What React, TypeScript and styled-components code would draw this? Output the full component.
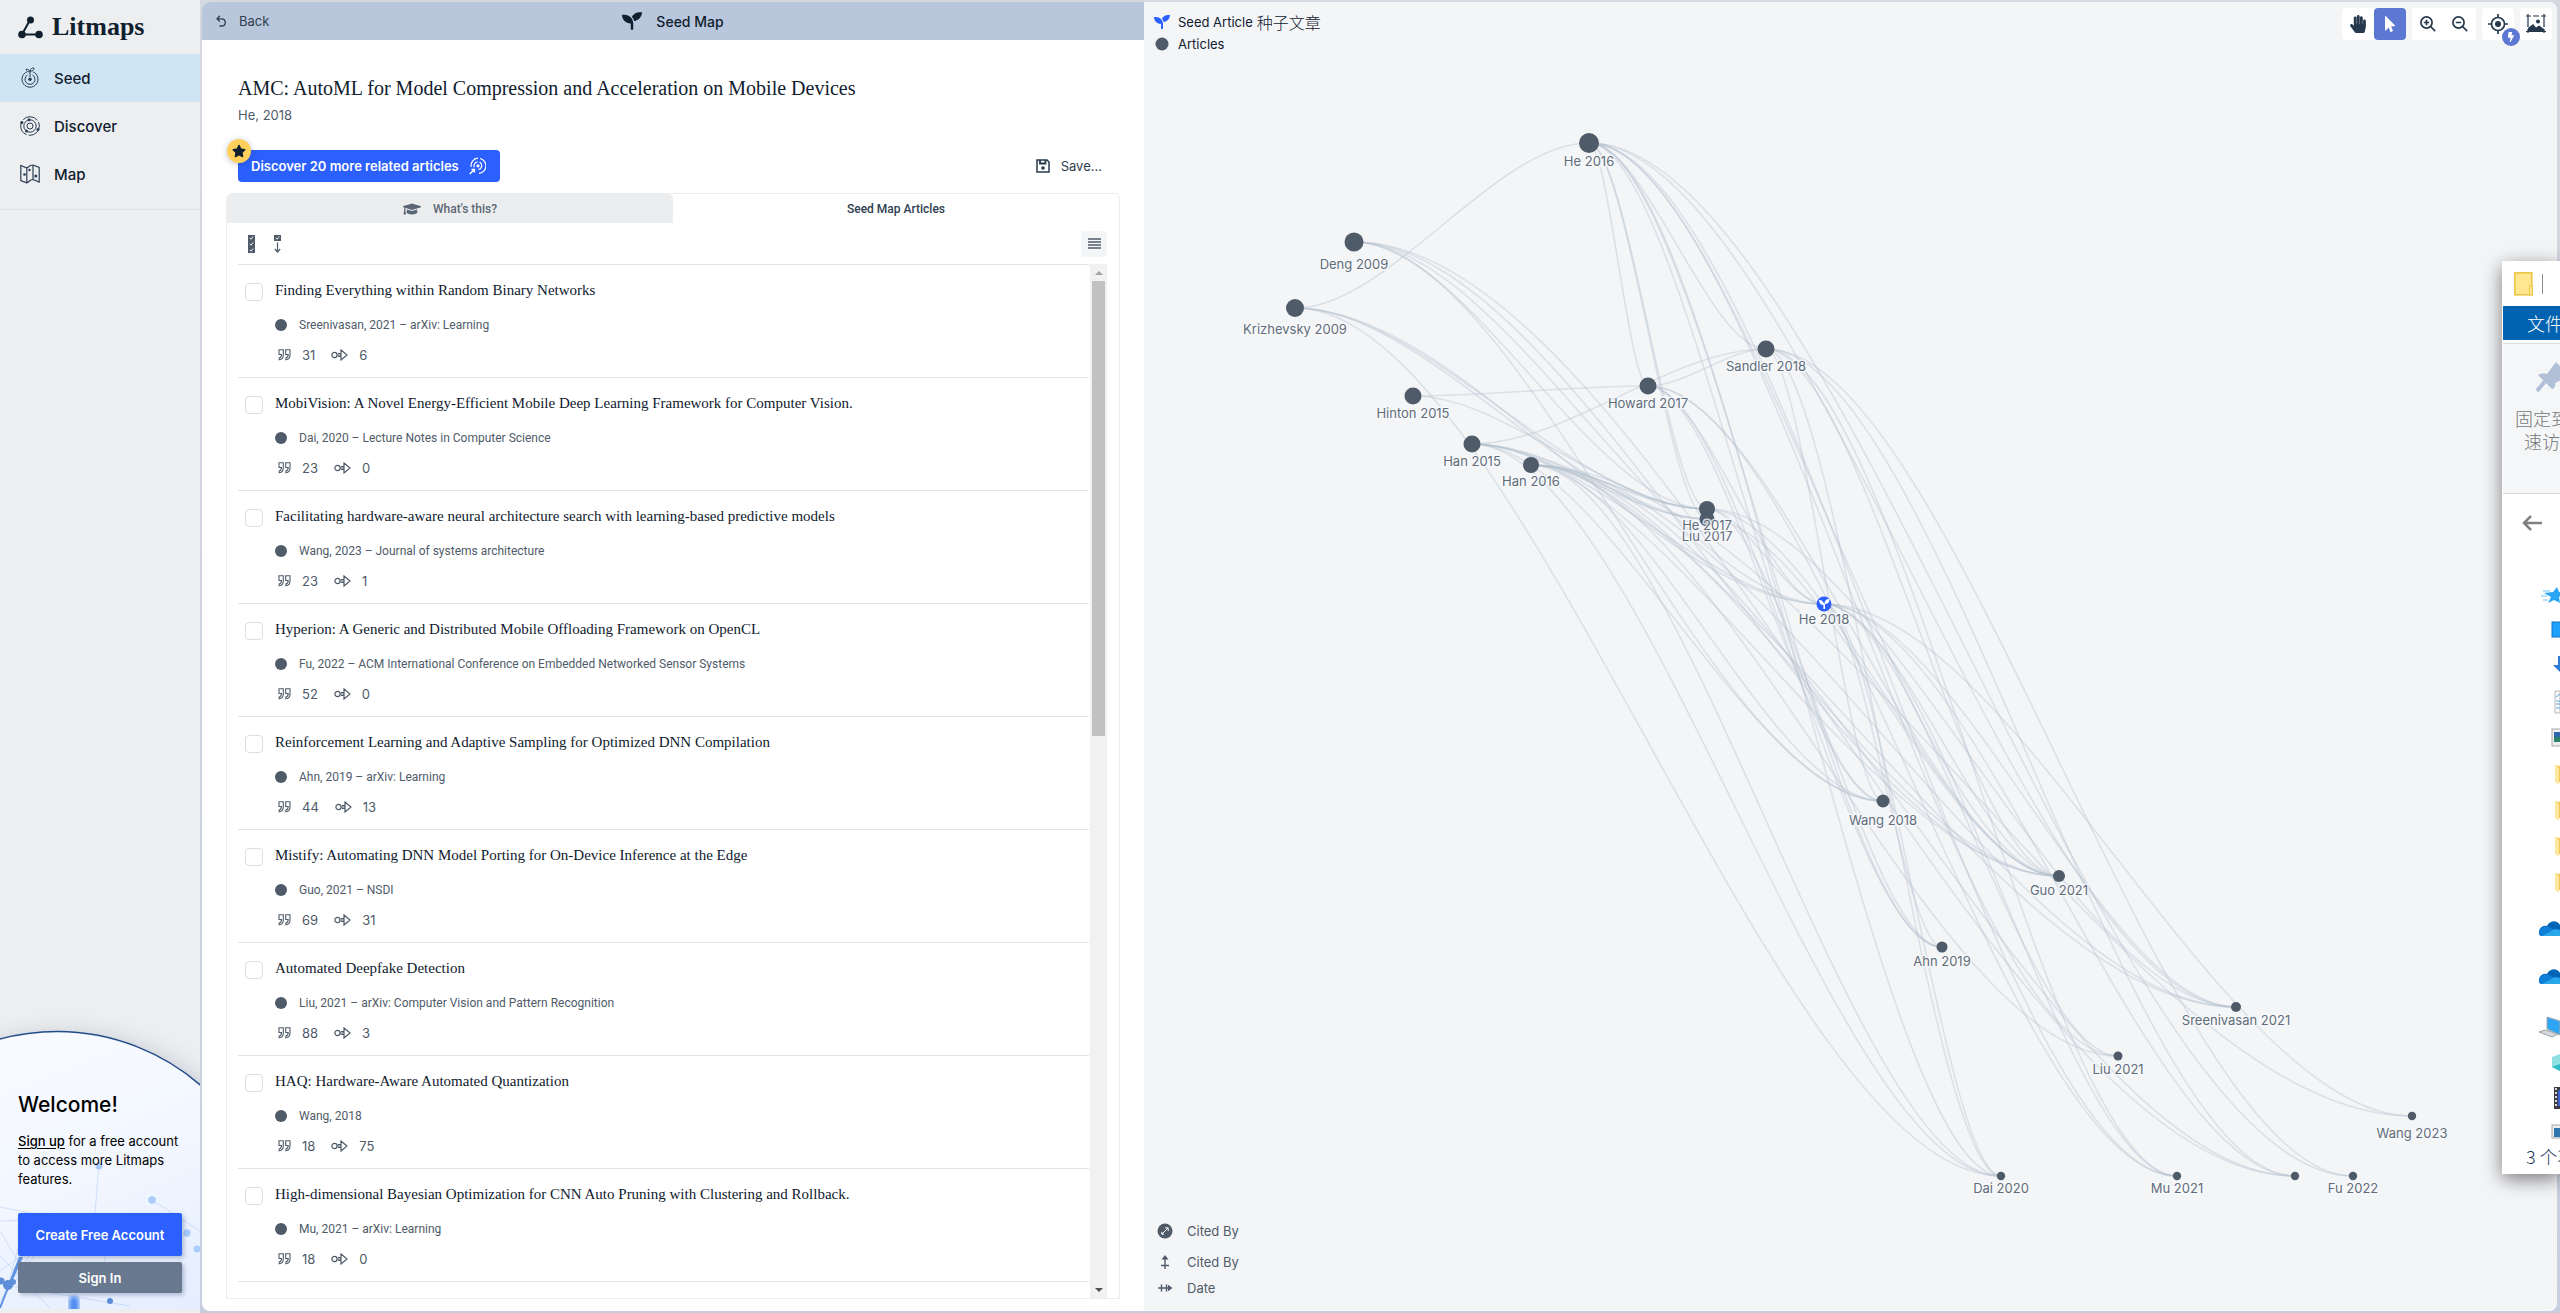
import React from "react";
import styled, { createGlobalStyle, css } from "styled-components";
import { FaSeedling, FaStar, FaGraduationCap, FaHandPaper, FaMousePointer, FaBolt } from "react-icons/fa";

const sans = `Inter, "Liberation Sans", "Noto Sans CJK SC", sans-serif`;
const narrow = `Roboto, "Liberation Sans", "Noto Sans CJK SC", sans-serif`;
const serif = `"Liberation Serif", "Noto Sans CJK SC", serif`;
const slate = "#4f5b69";
const label = "#616d7b";
const ink = "#10202e";
const line = "#e1e2e3";
const blue = "#2b60ff";

const GlobalStyle = createGlobalStyle`
  * { box-sizing: border-box; }
  body { margin: 0; background: #eceef0; font-family: ${sans}; color: ${ink}; }
  button { font: inherit; color: inherit; border: 0; padding: 0; background: none; cursor: pointer; }
  h1, h2, h3, p, ul { margin: 0; padding: 0; font-weight: 400; }
  ul { list-style: none; }
  svg { display: block; flex: none; }
`;

const Shell = styled.div`
  position: relative;
  display: flex;
  height: 100vh;
  overflow: hidden;
`;

/* ---------- sidebar ---------- */
const Sidebar = styled.aside`
  display: flex;
  flex-direction: column;
  flex: none;
  width: 200px;
  padding-bottom: 4px;
  background: #eceef0;
`;
const Brand = styled.a`
  display: flex;
  align-items: center;
  gap: 9px;
  height: 54px;
  padding-left: 18px;
  font: 700 26px/32px ${serif};
  color: ${ink};
  text-decoration: none;
`;
const Nav = styled.nav`
  padding-bottom: 11px;
  border-bottom: 1px solid #dfe1e3;
`;
const NavLink = styled.a<{ $active?: boolean }>`
  display: flex;
  align-items: center;
  gap: 14px;
  height: 48px;
  padding-left: 20px;
  font-size: 15px;
  font-weight: 500;
  color: ${ink};
  text-decoration: none;
  background: ${(p) => (p.$active ? "#d0e5f3" : "transparent")};
`;
const Welcome = styled.section`
  position: relative;
  margin-top: auto;
  height: 278px;
  padding: 59px 18px 0;
  color: #000;
`;
const WelcomeArt = styled.svg`
  position: absolute;
  inset: 0;
  width: 100%;
  height: 100%;
`;
const WelcomeBody = styled.div`
  position: relative;
  display: flex;
  flex-direction: column;
`;
const WelcomeTitle = styled.h2`
  font-size: 21px;
  line-height: 30px;
  font-weight: 500;
`;
const WelcomeText = styled.p`
  padding-top: 12px;
  font-size: 13px;
  line-height: 19px;
  white-space: nowrap;
  a { color: inherit; font-weight: 500; text-underline-offset: 2px; }
`;
const Cta = styled.button<{ $tone: "primary" | "muted" }>`
  border-radius: 2px;
  color: #fff;
  font-size: 13px;
  font-weight: 600;
  box-shadow: 2px 2px 4px rgba(60, 80, 120, 0.35);
  ${(p) =>
    p.$tone === "primary"
      ? css`height: 43px; margin-top: 24px; background: ${blue};`
      : css`height: 31px; margin-top: 6px; background: #68788e;`}
`;

/* ---------- framed workspace ---------- */
const Frame = styled.div`
  display: flex;
  flex: 1;
  min-width: 0;
  padding: 2px 3px 2px 2px;
  background: linear-gradient(#d6d8e0, #c8cede);
`;
const Workspace = styled.main`
  display: flex;
  flex: 1;
  min-width: 0;
  overflow: hidden;
  border-radius: 8px;
  background: #fff;
`;
const Panel = styled.section`
  display: flex;
  flex-direction: column;
  flex: 2;
  min-width: 0;
`;
const TopBar = styled.header`
  display: grid;
  grid-template-columns: 1fr auto 1fr;
  align-items: center;
  height: 38px;
  padding: 0 14px;
  background: #b8c7db;
`;
const BackButton = styled.button`
  justify-self: start;
  display: flex;
  align-items: center;
  gap: 13px;
  font-size: 13px;
  color: #2f3e50;
`;
const BarTitle = styled.h1`
  display: flex;
  align-items: center;
  gap: 14px;
  font-size: 14px;
  font-weight: 500;
`;
const Body = styled.div`
  display: flex;
  flex-direction: column;
  flex: 1;
  min-height: 0;
  padding: 0 24px 12px;
`;
const Heading = styled.div`
  padding: 35px 12px 0;
`;
const ArticleTitle = styled.h2`
  font: 400 20px/26px ${serif};
`;
const Byline = styled.p`
  padding-top: 4px;
  font-size: 13px;
  line-height: 20px;
  color: ${slate};
`;
const Actions = styled.div`
  display: flex;
  align-items: center;
  justify-content: space-between;
  padding: 25px 18px 11px 12px;
`;
const DiscoverButton = styled.button`
  position: relative;
  display: flex;
  align-items: center;
  gap: 10px;
  height: 32px;
  padding: 0 14px 0 13px;
  border-radius: 4px;
  background: ${blue};
  color: #fff;
  font-size: 13px;
  font-weight: 600;
`;
const StarBadge = styled.span`
  position: absolute;
  left: -11px;
  top: -11px;
  display: grid;
  place-items: center;
  width: 24px;
  height: 24px;
  border-radius: 50%;
  background: #ffd15c;
  color: ${ink};
  box-shadow: 0 1px 6px rgba(40, 60, 110, 0.3);
`;
const SaveButton = styled.button`
  display: flex;
  align-items: center;
  gap: 11px;
  font-size: 13px;
  color: #2f3e50;
`;
const Card = styled.div`
  display: flex;
  flex-direction: column;
  flex: 1;
  min-height: 0;
  border: 1px solid #ebecee;
  border-radius: 6px 6px 0 0;
`;
const Tabs = styled.div`
  display: grid;
  grid-template-columns: 1fr 1fr;
  height: 29px;
`;
const Tab = styled.button<{ $active?: boolean }>`
  display: flex;
  align-items: center;
  justify-content: center;
  gap: 12px;
  font: 500 12px/18px ${narrow};
  border-radius: 5px 5px 0 0;
  color: ${(p) => (p.$active ? "#2f3e50" : "#5b6775")};
  background: ${(p) => (p.$active ? "#fff" : "#ebedef")};
`;
const ListTools = styled.div`
  display: flex;
  align-items: center;
  gap: 19px;
  height: 41px;
  padding: 0 12px 0 21px;
`;
const DensityButton = styled.button`
  display: grid;
  place-items: center;
  width: 26px;
  height: 26px;
  margin-left: auto;
  border-radius: 3px;
  background: #f3f5f7;
`;
const ListArea = styled.div`
  display: flex;
  flex: 1;
  min-height: 0;
  padding: 0 12px 0 11px;
`;
const List = styled.ul`
  flex: 1;
  min-width: 0;
  overflow: hidden;
  border-top: 1px solid ${line};
`;
const Row = styled.li`
  display: flex;
  gap: 12px;
  height: 113px;
  padding: 16px 0 0 7px;
  border-bottom: 1px solid ${line};
`;
const Check = styled.input`
  appearance: none;
  flex: none;
  width: 18px;
  height: 18px;
  margin: 2px 0 0;
  border: 1px solid #dcdee1;
  border-radius: 4px;
  background: #fff;
`;
const RowTitle = styled.label`
  display: block;
  font: 400 15px/18px ${serif};
  color: ${ink};
`;
const Meta = styled.p`
  display: flex;
  align-items: center;
  gap: 12px;
  padding-top: 17px;
  font: 12px/18px ${narrow};
  color: ${slate};
`;
const Dot = styled.span<{ $size: number }>`
  width: ${(p) => p.$size}px;
  height: ${(p) => p.$size}px;
  border-radius: 50%;
  background: ${slate};
`;
const Counts = styled.p`
  display: flex;
  align-items: center;
  padding: 11px 0 0 3px;
  font-size: 13px;
  line-height: 20px;
  color: ${slate};
  svg { margin-right: 11px; }
  span { margin-right: 16px; }
`;
const ScrollTrack = styled.div`
  display: flex;
  flex-direction: column;
  align-items: center;
  width: 17px;
  margin-left: 1px;
  background: #f1f1f1;
`;
const ScrollArrow = styled.span<{ $down?: boolean }>`
  display: grid;
  place-items: center;
  width: 17px;
  height: 17px;
  margin-top: ${(p) => (p.$down ? "auto" : "0")};
  &::before {
    content: "";
    border: 4px solid transparent;
    ${(p) =>
      p.$down
        ? "border-top-color: #505050; border-bottom-width: 0;"
        : "border-bottom-color: #a3a3a3; border-top-width: 0;"}
  }
`;
const ScrollThumb = styled.span`
  width: 13px;
  height: 44%;
  background: #c1c1c1;
`;

/* ---------- map ---------- */
const MapArea = styled.section`
  position: relative;
  flex: 3;
  min-width: 0;
  background: #f4f5f7;
`;
const Graph = styled.svg`
  width: 100%;
  height: 100%;
  text { font: 13px ${sans}; fill: ${label}; text-anchor: middle; stroke: #f8fafc; stroke-width: 3px; stroke-opacity: 0.8; paint-order: stroke; stroke-linejoin: round; }
`;
const Legend = styled.ul<{ $place: "top" | "bottom" }>`
  position: absolute;
  display: flex;
  flex-direction: column;
  font-size: 13px;
  ${(p) =>
    p.$place === "top"
      ? css`left: 10px; top: 8px; color: ${ink};`
      : css`left: 13px; bottom: 11px; color: ${slate};`}
`;
const LegendItem = styled.li<{ $height: number; $gap: number }>`
  display: flex;
  align-items: center;
  gap: ${(p) => p.$gap}px;
  height: ${(p) => p.$height}px;
`;
const Cjk = styled.span`
  font: 300 16px/22px "Noto Sans CJK SC", sans-serif;
`;
const LegendText = styled.span`
  display: flex;
  align-items: center;
  gap: 4px;
`;
const MapTools = styled.div`
  position: absolute;
  top: 6px;
  right: 5px;
  display: flex;
  gap: 6px;
`;
const ToolGroup = styled.div`
  display: flex;
  border-radius: 4px;
  background: #fff;
`;
const Tool = styled.button<{ $active?: boolean }>`
  position: relative;
  display: grid;
  place-items: center;
  width: 32px;
  height: 32px;
  border-radius: 4px;
  color: ${(p) => (p.$active ? "#fff" : "#26384c")};
  background: ${(p) => (p.$active ? "#5c78d2" : "transparent")};
`;
const ToolBadge = styled.span`
  position: absolute;
  right: -6px;
  bottom: -6px;
  display: grid;
  place-items: center;
  width: 18px;
  height: 18px;
  border-radius: 50%;
  color: #fff;
  background: #5c78d2;
`;

/* ---------- file explorer window over the page ---------- */
const Explorer = styled.aside`
  position: absolute;
  z-index: 2;
  top: 261px;
  right: 0;
  display: flex;
  flex-direction: column;
  width: 58px;
  height: 913px;
  overflow: hidden;
  border-left: 1px solid #fff;
  background: #fff;
  white-space: nowrap;
  font-family: "Noto Sans CJK SC", sans-serif;
  > * { flex: none; }
`;
const ExplorerShadow = styled.div`
  position: absolute;
  z-index: 1;
  top: 261px;
  right: 0;
  width: 58px;
  height: 913px;
  box-shadow: 0 5px 18px rgba(0, 0, 0, 0.5);
`;
const WinTitle = styled.div`
  display: flex;
  align-items: center;
  gap: 9px;
  height: 45px;
  padding-left: 11px;
`;
const WinDivider = styled.span`
  width: 1px;
  height: 20px;
  background: #8c8c8c;
`;
const WinMenu = styled.button`
  height: 34px;
  padding-left: 24px;
  text-align: left;
  font-size: 18px;
  font-weight: 300;
  color: #fff;
  background: #0063b1;
`;
const WinRibbon = styled.div`
  height: 151px;
  margin-top: 3px;
  padding: 18px 0 0 12px;
  border: solid #dadbdc;
  border-width: 1px 0;
  background: #f5f6f7;
  color: #767676;
  font-size: 18px;
  font-weight: 300;
  line-height: 23px;
  svg { margin: 0 0 15px 21px; }
  p { font-weight: 300; }
  p + p { padding-left: 9px; }
`;
const WinBack = styled.div`
  height: 89px;
  padding: 21px 0 0 19px;
`;
const WinStatus = styled.p`
  position: absolute;
  left: 23px;
  bottom: 0;
  font-size: 18px;
  font-weight: 300;
  line-height: 36px;
  color: #1e3a5f;
`;

/* ---------- data ---------- */
const articles: [string, string, number, number][] = [
  ["Finding Everything within Random Binary Networks", "Sreenivasan, 2021 – arXiv: Learning", 31, 6],
  ["MobiVision: A Novel Energy-Efficient Mobile Deep Learning Framework for Computer Vision.", "Dai, 2020 – Lecture Notes in Computer Science", 23, 0],
  ["Facilitating hardware-aware neural architecture search with learning-based predictive models", "Wang, 2023 – Journal of systems architecture", 23, 1],
  ["Hyperion: A Generic and Distributed Mobile Offloading Framework on OpenCL", "Fu, 2022 – ACM International Conference on Embedded Networked Sensor Systems", 52, 0],
  ["Reinforcement Learning and Adaptive Sampling for Optimized DNN Compilation", "Ahn, 2019 – arXiv: Learning", 44, 13],
  ["Mistify: Automating DNN Model Porting for On-Device Inference at the Edge", "Guo, 2021 – NSDI", 69, 31],
  ["Automated Deepfake Detection", "Liu, 2021 – arXiv: Computer Vision and Pattern Recognition", 88, 3],
  ["HAQ: Hardware-Aware Automated Quantization", "Wang, 2018", 18, 75],
  ["High-dimensional Bayesian Optimization for CNN Auto Pruning with Clustering and Rollback.", "Mu, 2021 – arXiv: Learning", 18, 0],
];

type Node = { x: number; y: number; r: number; label?: string; dy?: number };
const nodes: Record<string, Node> = {
  he16: { x: 1589, y: 143, r: 10, label: "He 2016", dy: 23 },
  deng: { x: 1354, y: 242, r: 9.5, label: "Deng 2009", dy: 27 },
  kriz: { x: 1295, y: 308, r: 9, label: "Krizhevsky 2009", dy: 26 },
  hinton: { x: 1413, y: 396, r: 8.5, label: "Hinton 2015", dy: 22 },
  han15: { x: 1472, y: 444, r: 8.5, label: "Han 2015", dy: 22 },
  han16: { x: 1531, y: 465, r: 8, label: "Han 2016", dy: 21 },
  howard: { x: 1648, y: 386, r: 8.5, label: "Howard 2017", dy: 22 },
  sandler: { x: 1766, y: 349, r: 8.5, label: "Sandler 2018", dy: 22 },
  liu17: { x: 1707, y: 519, r: 7.5, label: "Liu 2017", dy: 22 },
  he17: { x: 1707, y: 509, r: 8, label: "He 2017", dy: 21 },
  he18: { x: 1824, y: 604, r: 7.5, label: "He 2018", dy: 20 },
  wang18: { x: 1883, y: 801, r: 6.5, label: "Wang 2018", dy: 24 },
  guo: { x: 2059, y: 876, r: 6, label: "Guo 2021", dy: 19 },
  ahn: { x: 1942, y: 947, r: 5.5, label: "Ahn 2019", dy: 19 },
  sree: { x: 2236, y: 1007, r: 5, label: "Sreenivasan 2021", dy: 18 },
  liu21: { x: 2118, y: 1056, r: 4.5, label: "Liu 2021", dy: 18 },
  wang23: { x: 2412, y: 1116, r: 4.2, label: "Wang 2023", dy: 22 },
  dai: { x: 2001, y: 1176, r: 4.2, label: "Dai 2020", dy: 17 },
  mu: { x: 2177, y: 1176, r: 4.2, label: "Mu 2021", dy: 17 },
  anon: { x: 2295, y: 1176, r: 4.2 },
  fu: { x: 2353, y: 1176, r: 4.2, label: "Fu 2022", dy: 17 },
};
const citations: Record<string, string> = {
  kriz: "he16 he17 liu17 he18 dai",
  deng: "he17 wang18 guo anon he18",
  hinton: "howard he17",
  han15: "sandler he17 liu17 he18 wang18 guo sree dai",
  han16: "he17 liu17 wang18 guo sree dai anon wang23 liu21",
  howard: "sandler wang18 he18 ahn guo mu",
  he16: "howard sandler he17 liu17 wang18 ahn guo sree dai mu fu liu21",
  sandler: "dai mu anon fu guo wang18",
  he17: "he18 guo sree ahn",
  liu17: "guo",
  he18: "guo ahn sree liu21 mu dai anon wang23",
};
const curve = (a: Node, b: Node) => {
  const k = (b.x - a.x) * 0.32;
  return `M${a.x} ${a.y}C${a.x + k} ${a.y} ${b.x - k} ${b.y} ${b.x} ${b.y}`;
};

/* ---------- icons ---------- */
const Logo = () => (
  <svg width="25" height="24" viewBox="0 0 25 24" fill={ink} stroke={ink}>
    <path d="M12.500 4L4 19.500H21" fill="none" strokeWidth="2" />
    <circle cx="12.500" cy="5" r="3.500" stroke="none" />
    <circle cx="4" cy="19.500" r="3.800" stroke="none" />
    <circle cx="21" cy="19.500" r="3.800" stroke="none" />
  </svg>
);
const SeedIcon = () => (
  <svg width="20" height="22" viewBox="0 0 20 22" fill="none" stroke="#2c3e55" strokeWidth="1">
    <path d="M7 4.800A8 8 0 1 0 13 4.800M7.500 8A5 5 0 1 0 12.500 8M10 10V3.500M10 5C8 5 6.500 4 6 2.200C8 2 9.500 3 10 5ZM10 4C10 2 12 .8 14 1C14 3 12.500 4.500 10 4Z" />
    <circle cx="10" cy="12.300" r="1.800" fill="#2c3e55" stroke="none" />
  </svg>
);
const OrbitIcon = () => (
  <svg width="20" height="22" viewBox="0 0 20 22" fill="none" stroke="#2c3e55" strokeWidth="1">
    <circle cx="10" cy="11" r="9.300" strokeDasharray="16 2" />
    <circle cx="10" cy="11" r="6.200" />
    <circle cx="10" cy="11" r="3" />
    <g fill="#2c3e55" stroke="none">
      <circle cx="1.800" cy="7.500" r="1.500" />
      <circle cx="18" cy="14.500" r="1.500" />
      <circle cx="9" cy="4.800" r="1.500" />
      <circle cx="6.500" cy="16" r="1.500" />
    </g>
  </svg>
);
const MapIcon = () => (
  <svg width="20" height="20" viewBox="0 0 20 20" fill="none" stroke="#2c3e55" strokeWidth="1.200">
    <path d="M.8 1.500L6.800 4V18.800L.8 16.500ZM6.800 4C9 4 8 1 13 1V15.500C9 15.500 9 18.800 6.800 18.800M13 1L19.200 3.500V18L13 15.500" />
    <g fill="#2c3e55" stroke="none">
      <circle cx="4.500" cy="10.500" r="1.300" />
      <circle cx="9.500" cy="6" r="1.200" />
      <circle cx="15.800" cy="12" r="1.500" />
    </g>
  </svg>
);
const BackIcon = () => (
  <svg width="10" height="12" viewBox="0 0 10 12" fill="none" stroke="#2f3e50" strokeWidth="1.300">
    <path d="M3.800 .8L1 3.800L3.800 6.500M1 3.800H5.500C10.500 3.800 10.500 11 5.500 11H3.500" />
  </svg>
);
const SearchOrbit = () => (
  <svg width="17" height="18" viewBox="0 0 17 18" fill="none" stroke="#fff" strokeWidth="1.200">
    <path d="M2.200 10A7.300 7.300 0 0 1 9 1.200M11 1.500A7.500 7.500 0 0 1 10 16.300M5.300 10.300A4 4 0 0 1 8.500 4.800M10.500 5A4 4 0 0 1 9.500 12.500" />
    <path d="M.8 17L5 12.800M2.500 12.500H5.400V15.500" strokeWidth="1.500" />
    <circle cx="9" cy="8.800" r="1.600" fill="#fff" stroke="none" />
  </svg>
);
const SaveIcon = () => (
  <svg width="14" height="14" viewBox="0 0 14 14" fill="none" stroke="#26384c" strokeWidth="1.500">
    <path d="M1 1H11L13 3V13H1Z" />
    <path d="M4 1V4.500H9.500V1" strokeWidth="1.800" />
    <circle cx="7" cy="9" r="1.800" fill="#26384c" stroke="none" />
  </svg>
);
const CheckBoxes = ({ count }: { count: 1 | 3 }) => (
  <svg width="7" height="18" viewBox="0 0 7 18" fill="none" stroke="#fff">
    {Array.from({ length: count }, (_, i) => (
      <g key={i}>
        <rect y={i * 6} width="7" height="6" fill={slate} stroke="none" />
        <path d={`M1.800 ${i * 6 + 2.8}l1.200 1.400L5.200 ${i * 6 + 1.5}`} strokeWidth=".9" />
      </g>
    ))}
    {count === 1 && <path d="M3.500 7.500V17M.8 14L3.500 17L6.200 14" stroke={slate} strokeWidth="1.200" />}
  </svg>
);
const LinesIcon = () => (
  <svg width="13" height="11" viewBox="0 0 13 11" stroke={slate} strokeWidth="1.300">
    <path d="M0 1H13M0 4H13M0 7H13M0 10H13" />
  </svg>
);
const QuoteIcon = () => (
  <svg width="13" height="12" viewBox="0 0 13 12" fill="none" stroke={slate} strokeWidth="1.100">
    <path d="M5.300 .8H1V5.500H3.500C3.500 7.500 3 8.500 1.200 9V10.800C4 10.500 5.300 9 5.300 6ZM12 .8H7.700V5.500H10.200C10.200 7.500 9.700 8.500 7.900 9V10.800C10.700 10.500 12 9 12 6Z" />
  </svg>
);
const RefIcon = () => (
  <svg width="17" height="12" viewBox="0 0 17 12" fill="none" stroke={slate} strokeWidth="1.200">
    <circle cx="3.500" cy="6" r="2.600" />
    <path d="M6 6H10M7 4.500H10M7 7.500H10M10 1L16 6L10 11Z" />
  </svg>
);
const ZoomIcon = ({ plus }: { plus?: boolean }) => (
  <svg width="16" height="16" viewBox="0 0 16 16" fill="none" stroke="currentColor" strokeWidth="1.700">
    <circle cx="6.500" cy="6.500" r="5.600" />
    <path d={`M10.500 10.500L15.200 15.200M3.800 6.500H9.200${plus ? "M6.500 3.800V9.200" : ""}`} />
  </svg>
);
const TargetIcon = () => (
  <svg width="20" height="20" viewBox="0 0 20 20" fill="none" stroke="currentColor" strokeWidth="1.700">
    <circle cx="10" cy="10" r="6.500" />
    <circle cx="10" cy="10" r="3" fill="currentColor" stroke="none" />
    <path d="M10 0V4M10 16V20M0 10H4M16 10H20" />
  </svg>
);
const ImageIcon = () => (
  <svg width="20" height="20" viewBox="0 0 20 20" fill="none" stroke="currentColor" strokeWidth="1.200">
    <path d="M2 0V13M0 2H5M7 2H13M15 2H20M18 0V13M0 17.500H20M2 15V19M18 15V19" />
    <path d="M2 17V14L7 10L10 13.500L13 11.500L18 15V17Z" fill="currentColor" stroke="none" />
    <circle cx="12" cy="7.500" r="2" fill="currentColor" stroke="none" />
  </svg>
);
const FolderTree = () => (
  <svg width="57" height="562" viewBox="0 0 57 562">
    <defs>
      <linearGradient id="fold" x2="1"><stop stopColor="#ffe9a6" /><stop offset="1" stopColor="#f2c14e" /></linearGradient>
    </defs>
    <path d="M54 4L56 9L61 10L56 14L57 20L51 17L45 20L48 14L41 10L50 9Z" fill="#2aa5f5" />
    <path d="M40 8H47M38 13H44M40 17H45" stroke="#6cc4fa" />
    <rect x="49" y="39" width="10" height="15" fill="#1ea0fb" stroke="#1173c4" />
    <path d="M55 73H57V89L50 82H55Z" fill="#2b7cd3" />
    <path d="M52 108H57V130H52Z" fill="#fafafa" stroke="#b9b9b9" />
    <path d="M53 114L57 111M53 118H57M53 121H57M53 125H57" stroke="#58a7e6" />
    <rect x="49" y="146" width="10" height="17" fill="#eee" stroke="#aaa" />
    <rect x="51" y="149" width="6" height="10" fill="#2f66ad" />
    <rect x="51" y="154" width="6" height="5" fill="#2d8068" />
    {[182, 218, 254, 290].map((y) => (
      <g key={y}>
        <path d={`M52 ${y}L57 ${y + 1}V${y + 17}H52Z`} fill="url(#fold)" />
        <path d={`M52 ${y}L56 ${y + 4}V${y + 20}L52 ${y + 17}Z`} fill="#ffe7a0" />
      </g>
    ))}
    {[338, 386].map((y) => (
      <g key={y}>
        <path d={`M36 ${y + 12}C36 ${y + 6} 41 ${y + 4} 44 ${y + 5}C47 ${y - 1} 54 ${y - 1} 57 ${y + 4}V${y + 15}H40C37 ${y + 15} 36 ${y + 14} 36 ${y + 12}Z`} fill="#0364b8" />
        <path d={`M36 ${y + 12}C36 ${y + 6} 42 ${y + 4} 46 ${y + 6}L57 ${y + 12}V${y + 15}H40C37 ${y + 15} 36 ${y + 14} 36 ${y + 12}Z`} fill="#0f7fd8" />
        <path d={`M39 ${y + 15}L52 ${y + 8}L57 ${y + 9}V${y + 15}Z`} fill="#28a8ea" />
      </g>
    ))}
    <path d="M44 434L57 438V452L44 446Z" fill="#2ea6f5" stroke="#a5a9ad" />
    <path d="M36 449L42 447L55 451L49 454Z" fill="#d5d9dd" stroke="#9ea3a8" />
    <path d="M49 474L57 471V488L49 484Z" fill="#8fe0e2" />
    <path d="M49 484L57 481V488Z" fill="#2cbcc6" />
    <rect x="51" y="504" width="8" height="22" fill="#3b3b45" />
    <path d="M53 505V525" stroke="#ddd" strokeWidth="2" strokeDasharray="2 2" />
    <rect x="55" y="507" width="2" height="16" fill="#3d63d2" />
    <rect x="49" y="542" width="10" height="13" fill="#eee" stroke="#aaa" />
    <rect x="51" y="545" width="6" height="9" fill="#2f76ad" />
  </svg>
);

const WelcomeBackdrop = () => (
  <WelcomeArt viewBox="0 0 200 278" preserveAspectRatio="none" aria-hidden="true" overflow="visible">
    <defs>
      <linearGradient id="sky" x2=".4" y2="1"><stop stopColor="#fafcff" /><stop offset=".45" stopColor="#f3f7ff" /><stop offset="1" stopColor="#deeaff" /></linearGradient>
      <filter id="glow" x="-20%" y="-20%" width="140%" height="140%"><feGaussianBlur stdDeviation="12" /></filter>
      <filter id="soft"><feGaussianBlur stdDeviation="2" /></filter>
      <clipPath id="bounds"><rect y="-60" width="200" height="338" /></clipPath>
    </defs>
    <g clipPath="url(#bounds)">
      <circle cx="62" cy="224" r="218" fill="#7d8a9b" opacity=".5" filter="url(#glow)" />
      <circle cx="57" cy="219" r="218.500" fill="url(#sky)" stroke="#234b8c" strokeWidth="1.500" />
      <g stroke="#a8c6f3" fill="none" opacity=".6">
        <path d="M99 135L95 182M0 176L40 184M0 190L60 188M0 200L30 250M25 190L8 255M60 182L10 252M60 190L0 270M0 240L70 190M10 255L130 275M105 225V240M152 169L200 200M0 225L50 277" strokeWidth=".8" />
      </g>
      <path d="M20 226L0 277M9 255L22 226" stroke="#5f92e0" strokeWidth="2" />
      <g fill="#a9cbfd">
        <circle cx="99" cy="135" r="3.500" />
        <circle cx="152" cy="169" r="3.700" />
        <circle cx="187" cy="202" r="3.700" />
        <circle cx="197" cy="218" r="3.500" />
      </g>
      <g fill="#5e8ed8">
        <circle cx="8" cy="254" r="5" />
        <circle cx="1" cy="250" r="3.500" />
        <circle cx="13" cy="251" r="3" />
        <circle cx="110" cy="270" r="3" />
      </g>
      <rect x="69" y="265" width="10" height="20" rx="5" fill="#4f8cf0" filter="url(#soft)" />
    </g>
  </WelcomeArt>
);

export default function App() {
  return (
    <>
      <GlobalStyle />
      <Shell>
        <Sidebar>
          <Brand href="#"><Logo />Litmaps</Brand>
          <Nav>
            <NavLink href="#seed" $active><SeedIcon />Seed</NavLink>
            <NavLink href="#discover"><OrbitIcon />Discover</NavLink>
            <NavLink href="#map"><MapIcon />Map</NavLink>
          </Nav>
          <Welcome>
            <WelcomeBackdrop />
            <WelcomeBody>
              <WelcomeTitle>Welcome!</WelcomeTitle>
              <WelcomeText>
                <a href="#signup">Sign up</a> for a free account<br />to access more Litmaps<br />features.
              </WelcomeText>
              <Cta $tone="primary">Create Free Account</Cta>
              <Cta $tone="muted">Sign In</Cta>
            </WelcomeBody>
          </Welcome>
        </Sidebar>

        <Frame>
          <Workspace>
            <Panel>
              <TopBar>
                <BackButton><BackIcon />Back</BackButton>
                <BarTitle><FaSeedling size={20} />Seed Map</BarTitle>
              </TopBar>
              <Body>
                <Heading>
                  <ArticleTitle>AMC: AutoML for Model Compression and Acceleration on Mobile Devices</ArticleTitle>
                  <Byline>He, 2018</Byline>
                </Heading>
                <Actions>
                  <DiscoverButton>
                    <StarBadge><FaStar size={14} /></StarBadge>
                    Discover 20 more related articles
                    <SearchOrbit />
                  </DiscoverButton>
                  <SaveButton><SaveIcon />Save...</SaveButton>
                </Actions>
                <Card>
                  <Tabs role="tablist">
                    <Tab role="tab"><FaGraduationCap size={18} />What's this?</Tab>
                    <Tab role="tab" $active>Seed Map Articles</Tab>
                  </Tabs>
                  <ListTools>
                    <button aria-label="Select all"><CheckBoxes count={3} /></button>
                    <button aria-label="Select below"><CheckBoxes count={1} /></button>
                    <DensityButton aria-label="Row density"><LinesIcon /></DensityButton>
                  </ListTools>
                  <ListArea>
                    <List>
                      {articles.map(([title, meta, cites, refs], i) => (
                        <Row key={title}>
                          <Check type="checkbox" id={`article-${i}`} />
                          <div>
                            <RowTitle htmlFor={`article-${i}`}>{title}</RowTitle>
                            <Meta><Dot $size={12} />{meta}</Meta>
                            <Counts><QuoteIcon /><span>{cites}</span><RefIcon /><span>{refs}</span></Counts>
                          </div>
                        </Row>
                      ))}
                    </List>
                    <ScrollTrack aria-hidden="true">
                      <ScrollArrow />
                      <ScrollThumb />
                      <ScrollArrow $down />
                    </ScrollTrack>
                  </ListArea>
                </Card>
              </Body>
            </Panel>

            <MapArea>
              <Graph viewBox="1144 2 1413 1309" preserveAspectRatio="xMidYMid meet">
                <g fill="none" stroke="#b4c0ce" strokeOpacity=".38" strokeWidth="1.600">
                  {Object.entries(citations).flatMap(([from, list]) =>
                    list.split(" ").map((to) => <path key={`${from}-${to}`} d={curve(nodes[from], nodes[to])} />)
                  )}
                </g>
                {Object.entries(nodes).map(([id, n]) => (
                  <circle key={id} cx={n.x} cy={n.y} r={n.r} fill={id === "he18" ? blue : slate} />
                ))}
                <path d="M1819 600C1822 600 1824 602 1824 605C1821 605 1819 603 1819 600ZM1829.500 599C1826 599 1824.500 601 1824.500 604C1828 604 1829.500 602 1829.500 599ZM1823.400 603H1825V609H1823.400Z" fill="#fff" />
                {Object.entries(nodes).map(([id, n]) =>
                  n.label ? <text key={id} x={n.x} y={n.y + (n.dy ?? 20)}>{n.label}</text> : null
                )}
              </Graph>
              <Legend $place="top">
                <LegendItem $height={24} $gap={8}>
                  <FaSeedling size={16} color={blue} />
                  <LegendText>Seed Article <Cjk lang="zh">种子文章</Cjk></LegendText>
                </LegendItem>
                <LegendItem $height={20} $gap={9}><svg width="15" height="14"><circle cx="8" cy="7" r="6.500" fill={slate} /></svg>Articles</LegendItem>
              </Legend>
              <Legend $place="bottom">
                <LegendItem $height={34} $gap={14}>
                  <svg width="16" height="16" viewBox="0 0 16 16">
                    <circle cx="8" cy="8" r="7.500" fill={slate} />
                    <path d="M5 11L11 5M8 4.800H11.200V8M4.800 9V11.200H7" stroke="#fff" fill="none" />
                  </svg>
                  Cited By
                </LegendItem>
                <LegendItem $height={28} $gap={14}>
                  <svg width="16" height="16" viewBox="0 0 16 16">
                    <path d="M8 15V4M4 11.500H12" stroke={slate} strokeWidth="1.400" /><path d="M8 1L11.500 5.500H4.500Z" fill={slate} />
                  </svg>
                  Cited By
                </LegendItem>
                <LegendItem $height={24} $gap={14}>
                  <svg width="16" height="16" viewBox="0 0 16 16">
                    <path d="M1 8H12M4.500 4.500V11.500M9.500 4.500V11.500" stroke={slate} strokeWidth="1.400" /><path d="M15.500 8L11 4.800V11.200Z" fill={slate} />
                  </svg>
                  Date
                </LegendItem>
              </Legend>
              <MapTools>
                <ToolGroup>
                  <Tool aria-label="Pan"><FaHandPaper size={18} /></Tool>
                  <Tool aria-label="Select" $active><FaMousePointer size={16} /></Tool>
                </ToolGroup>
                <ToolGroup>
                  <Tool aria-label="Zoom in"><ZoomIcon plus /></Tool>
                  <Tool aria-label="Zoom out"><ZoomIcon /></Tool>
                </ToolGroup>
                <ToolGroup>
                  <Tool aria-label="Centre"><TargetIcon /><ToolBadge><FaBolt size={10} /></ToolBadge></Tool>
                </ToolGroup>
                <ToolGroup>
                  <Tool aria-label="Export image"><ImageIcon /></Tool>
                </ToolGroup>
              </MapTools>
            </MapArea>
          </Workspace>
        </Frame>

        <ExplorerShadow />
        <Explorer lang="zh">
          <WinTitle>
            <svg width="19" height="24" viewBox="0 0 19 24">
              <rect x=".8" y=".8" width="17" height="22" fill="#ffe68f" stroke="#e9c446" strokeWidth="1.500" />
              <rect x="15.500" y="14" width="3" height="9" fill="#ffe68f" stroke="#e9c446" />
            </svg>
            <WinDivider />
          </WinTitle>
          <WinMenu>文件</WinMenu>
          <WinRibbon>
            <svg width="28" height="30" viewBox="0 0 28 30" fill="#b1c0d6">
              <path d="M20 0L30 10V16L19 21C20 24 18 27 16 27L2 13C6 11 9 11 11 12Z" />
              <path d="M10 18L1 29" stroke="#b1c0d6" strokeWidth="4" />
            </svg>
            <p>固定到</p>
            <p>速访</p>
          </WinRibbon>
          <WinBack>
            <svg width="20" height="16" viewBox="0 0 20 16" fill="none" stroke="#808080" strokeWidth="2.500">
              <path d="M20 8H2M9 1L2 8L9 15" />
            </svg>
          </WinBack>
          <FolderTree />
          <WinStatus>3 个项</WinStatus>
        </Explorer>
      </Shell>
    </>
  );
}
